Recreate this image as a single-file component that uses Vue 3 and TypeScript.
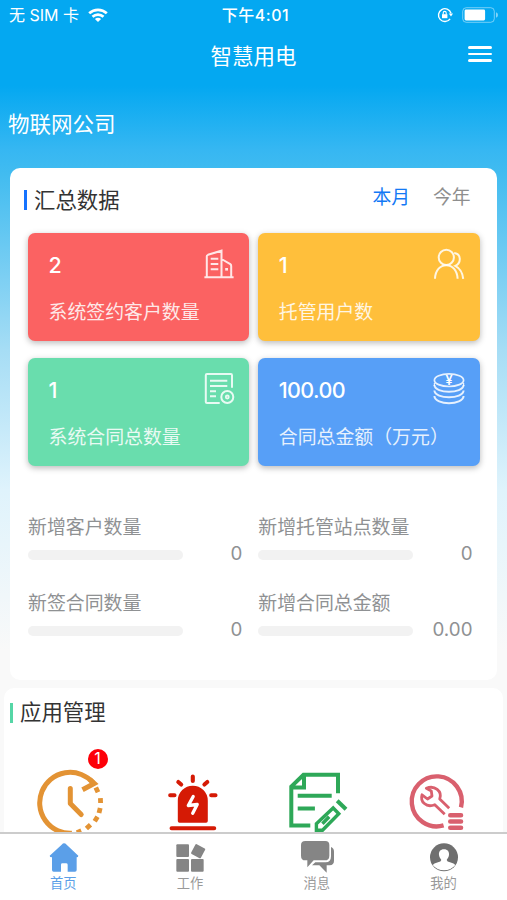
<script setup lang="ts">
import { ref } from 'vue'

interface Card { value: string; label: string; tone: string; icon: string }
interface Metric { label: string; value: string; percent: number }

const period = ref<'month' | 'year'>('month')
const activeTab = ref('home')

const cards: Card[] = [
  { value: '2', label: '系统签约客户数量', tone: 'red', icon: 'building' },
  { value: '1', label: '托管用户数', tone: 'amber', icon: 'users' },
  { value: '1', label: '系统合同总数量', tone: 'green', icon: 'contract' },
  { value: '100.00', label: '合同总金额（万元）', tone: 'blue', icon: 'coins' },
]

const metrics: Metric[] = [
  { label: '新增客户数量', value: '0', percent: 0 },
  { label: '新增托管站点数量', value: '0', percent: 0 },
  { label: '新签合同数量', value: '0', percent: 0 },
  { label: '新增合同总金额', value: '0.00', percent: 0 },
]

const tabs = [
  { id: 'home', label: '首页' },
  { id: 'work', label: '工作' },
  { id: 'message', label: '消息' },
  { id: 'mine', label: '我的' },
]
</script>

<template>
  <div class="screen">
    <div class="status">
      <div class="carrier">
        <span>无 SIM 卡</span>
        <svg class="wifi" viewBox="0 0 20 14" fill="none" stroke="#fff" stroke-width="2.7">
          <path d="M1.2 5.3C6.2.6 13.8.6 18.8 5.3" />
          <path d="M4.5 8.8C7.6 5.9 12.4 5.9 15.5 8.8" />
          <path d="M6.9 11Q10 8.5 13.1 11L10 14Z" fill="#fff" stroke="none" />
        </svg>
      </div>
      <div class="clock">下午4:01</div>
      <div class="indicators">
        <svg class="lock" viewBox="0 0 16 16" fill="none" stroke="#fff" stroke-width="1.4">
          <path d="M13.1 11.8A6.4 6.4 0 1 1 14 6.2" />
          <path d="M11.8 6.4H16L14 9.4Z" fill="#fff" stroke="none" />
          <path d="M5 7.2H10.4V11.2H5Z" fill="#fff" stroke="none" />
          <path d="M6.2 7.4V5.9a1.5 1.5 0 0 1 3 0V7.4" stroke-width="1.1" />
        </svg>
        <svg class="battery" viewBox="0 0 37 16">
          <rect x=".7" y=".7" width="31.6" height="14.6" rx="3.6" fill="none" stroke="#fff" stroke-opacity=".45" />
          <rect x="2.6" y="2.6" width="20.5" height="10.8" rx="1.4" fill="#fff" />
          <path d="M34 5.3Q36 6 36 8T34 10.7Z" fill="#fff" fill-opacity=".5" />
        </svg>
      </div>
    </div>

    <header class="nav">
      <h1>智慧用电</h1>
      <button class="menu" aria-label="菜单"><i /><i /><i /></button>
    </header>

    <div class="company">物联网公司</div>

    <section class="panel summary">
      <div class="head">
        <h2 class="heading">汇总数据</h2>
        <div class="periods">
          <span :class="{ on: period === 'month' }" @click="period = 'month'">本月</span>
          <span :class="{ on: period === 'year' }" @click="period = 'year'">今年</span>
        </div>
      </div>

      <div class="cards">
        <article v-for="card in cards" :key="card.label" class="card" :class="card.tone">
          <div class="card-top">
            <strong>{{ card.value }}</strong>
            <svg viewBox="0 0 32 32" fill="none" stroke="#fff" stroke-opacity=".85" stroke-width="2">
              <template v-if="card.icon === 'building'">
                <path d="M3.8 29V8.2Q3.8 7.3 5 6.8L18.5 2.7V29M18.5 11L27.3 16.2Q28.2 16.8 28.2 18V29M1.4 29.3H30.6M7.7 10.8H15.3M7.7 16H15.3M7.7 21.3H15.3" />
                <path d="M22.2 21.3H25" stroke-width="2.6" />
              </template>
              <template v-else-if="card.icon === 'users'">
                <circle cx="13.3" cy="9.4" r="7.6" />
                <path d="M2 30.8C2.3 22 7.5 17.2 13.3 17.2S24.2 22 24.6 30.8M21.2 5C28.3 5.8 28.6 14.8 22.3 17.8C27 20.3 29.7 25 30.2 30.8" />
              </template>
              <template v-else-if="card.icon === 'contract'">
                <path d="M29 14.7V2.2Q29 1.1 27.9 1.1H4Q2.8 1.1 2.8 2.2V29Q2.8 30.1 4 30.1H16.7M7 7.8H24.3M7 13H24.3M7 18.3H13M7 23.3H13" />
                <circle cx="24.3" cy="24" r="6" />
                <circle cx="24.3" cy="24" r="1.5" stroke-width="1.8" />
              </template>
              <template v-else>
                <ellipse cx="16" cy="7.2" rx="14.6" ry="6.3" stroke-width="1.7" />
                <path d="M1.4 12C2 21 30 21 30.6 12M1.4 17.5C2 26.5 30 26.5 30.6 17.5M1.4 23C2 32.6 30 32.6 30.6 23" />
                <path d="M1.4 10V13M30.6 10V13" stroke-width="1.2" />
                <text class="yen" x="16" y="11.8" text-anchor="middle" fill="#fff" stroke="none">¥</text>
              </template>
            </svg>
          </div>
          <p>{{ card.label }}</p>
        </article>
      </div>

      <div class="metrics">
        <div v-for="metric in metrics" :key="metric.label" class="metric">
          <div class="metric-label">{{ metric.label }}</div>
          <div class="metric-row">
            <div class="track"><div class="fill" :style="{ width: metric.percent + '%' }" /></div>
            <span>{{ metric.value }}</span>
          </div>
        </div>
      </div>
    </section>

    <section class="panel apps">
      <h2 class="heading mint">应用管理</h2>
      <div class="app-grid">
        <div class="app">
          <svg viewBox="0 0 70 70" fill="none" stroke="#e39334" stroke-width="5">
            <path d="M37 66.3A30.5 30.5 0 1 1 58 15.6" />
            <path d="M54.8 12.3L59.3 16.5L47.5 22.8" />
            <path d="M35.3 22V37L46.2 48" stroke-linecap="round" stroke-linejoin="round" transform="translate(0 -.5)" />
            <path d="M60.8 20.5L63 25.3M65.4 31.2L65.6 36M65.2 41L64 46M62.5 49.8L59.7 54.2M55.5 57.8L51.4 61.5M46.3 63.8L41.8 65.7" stroke-width="4.8" />
          </svg>
          <span class="badge">1</span>
        </div>
        <div class="app">
          <svg viewBox="0 0 70 70" fill="none" stroke="#d51a05" stroke-width="4.1" stroke-linecap="round">
            <path d="M20.8 54V33.7a15 15 0 0 1 30 0V54q0 1.7-1.7 1.7H22.5q-1.7 0-1.7-1.7Z" fill="#d51a05" stroke="none" />
            <path d="M14.6 61.3H57.2M35.8 9.5V14M13.2 28.3H17.5M54.2 28.3H58.5M21.3 15L24.2 17.5M50.3 15L47.4 17.5" />
            <path d="M36.2 29.5L31.3 38.5L40.2 37.5L35.7 46.3" stroke="#fff" stroke-width="3.3" stroke-linejoin="round" />
          </svg>
        </div>
        <div class="app">
          <svg viewBox="0 0 70 70" fill="none" stroke="#2ea858" stroke-width="4">
            <path d="M58 26.3V7.7H23.5L11.3 19.5V58.5H30.3M24 7.7V20.5H11.3M17.7 28.8H51.7M17.7 41.5H34.9" />
            <path d="M57.2 33.7L66 42.3" />
            <path d="M53.2 41L58.8 46.7L42.5 63.3H36.4V56.8ZM42.4 56.8L49.2 49.8" stroke-width="3.4" />
          </svg>
        </div>
        <div class="app">
          <svg viewBox="0 0 70 70" fill="none" stroke="#d9606e" stroke-width="4.4">
            <path d="M41.6 58.4A25 25 0 1 1 59 40.4" />
            <path d="M42.7 47.2L32.8 37.7C24 41.2 18 34.5 20 27.8L25.5 32L30 29L29.3 24L24.3 21.3C32.5 17.8 40.6 24.2 37.7 32L47.2 41.3" stroke-width="2.8" stroke-linejoin="round" />
            <path d="M48.3 48.3H59M48.3 54.5H59M48.3 60.8H59" stroke-width="4.6" stroke-linecap="round" />
          </svg>
        </div>
      </div>
    </section>

    <nav class="tabs">
      <a v-for="tab in tabs" :key="tab.id" :class="{ active: activeTab === tab.id }" @click="activeTab = tab.id">
        <svg v-if="tab.id === 'home'" viewBox="139 45 102 102" fill="currentColor">
          <path d="M193 55Q197 55 201 59L236 92Q236 97 231 97V135Q231 140 226 140H204V119Q204 115 199 115H188Q184 115 184 119V140H162Q157 140 157 135V97Q150 97 150 92L186 59Q190 55 193 55Z" />
        </svg>
        <svg v-else-if="tab.id === 'work'" viewBox="519 45 102 102" fill="currentColor">
          <rect x="529" y="58" width="38" height="38" rx="3" />
          <rect x="529" y="102" width="38" height="38" rx="3" />
          <rect x="573" y="102" width="38" height="38" rx="3" />
          <rect x="578" y="62" width="33" height="33" rx="3" transform="rotate(28 594.5 78.5)" />
        </svg>
        <svg v-else-if="tab.id === 'message'" viewBox="138 45 102 102" fill="currentColor">
          <path d="M154 48H214Q226 48 226 60V92Q226 106 212 106H179L160 127V106H154Q141 106 141 92V60Q141 48 154 48Z" />
          <path d="M231 66Q240 69 240 80V107Q240 120 227 121H218V143L196 121H174L184 112H215Q231 112 231 94Z" />
        </svg>
        <svg v-else viewBox="518 45 102 102">
          <circle cx="569" cy="97" r="42" fill="#6f6f6f" />
          <path d="M569 73C580 73 585 80 584 90C583 98 579 101 577 105Q578 110 587 112Q600 115 603 120Q590 136 569 136T535 120Q538 115 551 112Q560 110 561 105C559 101 555 98 554 90C553 80 558 73 569 73Z" fill="#fff" />
        </svg>
        <span>{{ tab.label }}</span>
      </a>
    </nav>
  </div>
</template>

<style>
body {
  margin: 0;
}
</style>

<style scoped>
.screen {
  display: flex;
  flex-direction: column;
  width: 507px;
  height: 900px;
  overflow: hidden;
  background: linear-gradient(#04a8f1 0, #04a8f1 86px, #36b7f2 150px, #42bcf0 175px, #a6ddf5 350px, #dff3fc 490px, #f9f9f9 650px);
  color: #fff;
  font-family: Inter, "Noto Sans CJK SC", sans-serif;
}

h1, h2, p {
  margin: 0;
  font-weight: 400;
}

svg {
  display: block;
}

.status {
  display: grid;
  grid-template-columns: 1fr auto 1fr;
  align-items: center;
  height: 30px;
  padding: 0 8px 0 9px;
  font-size: 16px;
  line-height: 30px;
}

.carrier {
  display: flex;
  align-items: center;
  gap: 9px;
}

.wifi {
  width: 20px;
  height: 14px;
}

.clock {
  padding-left: 3px;
  font-weight: 500;
  letter-spacing: 0.5px;
}

.indicators {
  display: flex;
  align-items: center;
  justify-content: flex-end;
  gap: 9px;
}

.lock {
  width: 16px;
  height: 16px;
}

.battery {
  width: 37px;
  height: 16px;
}

.nav {
  display: grid;
  grid-template-columns: 1fr auto 1fr;
  align-items: center;
  height: 52px;
  padding-right: 15px;
  padding-left: 15px;
}

.nav h1 {
  grid-column: 2;
  padding-bottom: 3px;
  font-size: 21.5px;
}

.menu {
  display: flex;
  flex-direction: column;
  gap: 4px;
  justify-self: end;
  width: 24px;
  margin-bottom: 4px;
  padding: 0;
  border: 0;
  background: none;
}

.menu i {
  height: 2.6px;
  border-radius: 2px;
  background: #fff;
}

.company {
  height: 86px;
  padding-left: 8px;
  font-size: 21.5px;
  line-height: 84px;
}

.panel {
  flex: none;
  border-radius: 10px;
  background: #fff;
}

.summary {
  box-sizing: border-box;
  height: 512px;
  margin: 0 10px;
  padding: 0 17.5px 0 18px;
}

.head {
  display: flex;
  justify-content: space-between;
  height: 65px;
  margin-left: -4px;
}

.heading {
  display: flex;
  align-items: center;
  gap: 7px;
  height: 60px;
  color: #333;
  font-size: 21.4px;
}

.heading::before {
  width: 3px;
  height: 20px;
  margin-top: 4px;
  background: #1673ff;
  content: "";
}

.periods {
  display: flex;
  gap: 23px;
  padding-right: 9px;
  color: #8e8e8e;
  font-size: 18.8px;
  line-height: 60px;
}

.periods .on {
  color: #1379f5;
}

.cards {
  display: grid;
  grid-template-columns: 1fr 1fr;
  gap: 17px 9px;
}

.card {
  box-sizing: border-box;
  height: 108px;
  padding: 15px 14.5px 0 20.5px;
  border-radius: 7px;
  box-shadow: 0 2px 6px rgb(0 0 0 / 28%);
}

.red { background: #fb6262; }
.amber { background: #ffbf3b; }
.green { background: #69ddad; }
.blue { background: #579ff7; }

.card-top {
  display: flex;
  justify-content: space-between;
}

.card-top svg {
  width: 32px;
  height: 32px;
}

.card strong {
  font-size: 21.5px;
  font-weight: 500;
  letter-spacing: -0.6px;
  line-height: 34px;
}

.yen {
  font-size: 12.5px;
  font-weight: 600;
}

.card p {
  margin-top: 16px;
  font-size: 18.9px;
  line-height: 30px;
  opacity: 0.86;
}

.metrics {
  display: grid;
  grid-template-columns: 1fr 1fr;
  gap: 0 9px;
  padding-top: 48px;
}

.metric {
  height: 76px;
  color: #8f9193;
}

.metric-label {
  font-size: 18.9px;
  line-height: 28px;
}

.metric-row {
  display: flex;
  align-items: center;
  justify-content: space-between;
  height: 25px;
  margin-top: -1px;
  padding-right: 7px;
}

.metric-row span {
  font-size: 18.8px;
}

.track {
  width: 155px;
  height: 10px;
  margin-top: 3px;
  border-radius: 5px;
  background: #f2f2f2;
}

.fill {
  height: 100%;
  border-radius: inherit;
  background: #1379f5;
}

.apps {
  box-sizing: border-box;
  height: 144px;
  margin: 8px 4px 0;
  padding: 0 4.5px;
  border-radius: 10px 10px 0 0;
  overflow: hidden;
}

.mint {
  height: 45px;
  margin-left: 1.5px;
}

.mint::before {
  background: #55d6a6;
}

.app-grid {
  display: grid;
  grid-template-columns: repeat(4, 1fr);
  padding-top: 34px;
}

.app {
  position: relative;
  display: flex;
  justify-content: center;
}

.app svg {
  width: 70px;
  height: 70px;
}

.badge {
  position: absolute;
  top: -18px;
  left: 79px;
  width: 20px;
  height: 20px;
  border-radius: 50%;
  background: #fd0008;
  font-size: 16px;
  line-height: 19px;
  text-align: center;
}

.tabs {
  display: grid;
  flex: 1;
  grid-template-columns: repeat(4, 1fr);
  border-top: 2px solid #ccc;
  background: #fff;
  color: #858585;
}

.tabs a {
  display: flex;
  flex-direction: column;
  align-items: center;
  padding-top: 6px;
}

.tabs svg {
  width: 34px;
  height: 34px;
}

.tabs span {
  color: #999;
  font-size: 13.3px;
  line-height: 18px;
}

.tabs .active,
.tabs .active span {
  color: #5b9fe8;
}
</style>
